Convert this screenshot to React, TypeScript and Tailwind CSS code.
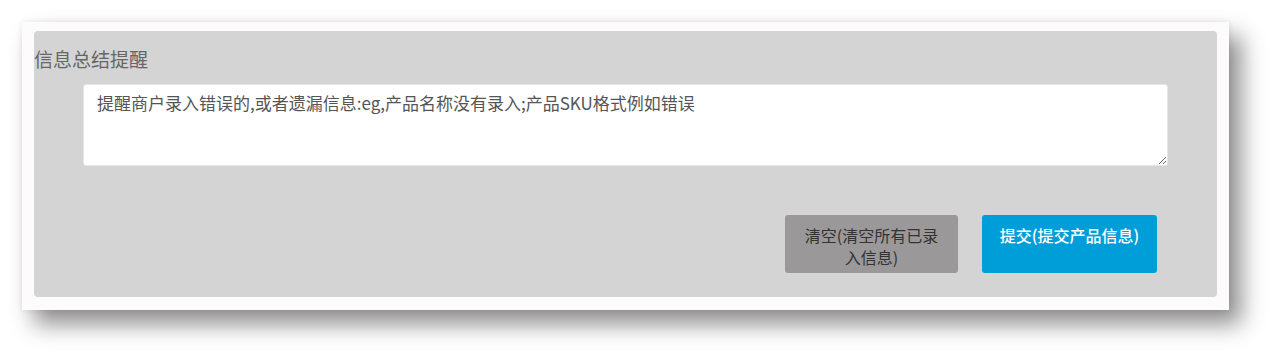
import { useState } from "react";

const font = { fontFamily: '"Noto Sans CJK SC", "Noto Sans", sans-serif' };

export default function App() {
  const [note, setNote] = useState(
    "提醒商户录入错误的,或者遗漏信息:eg,产品名称没有录入;产品SKU格式例如错误"
  );

  return (
    <div className="min-h-[361px] w-[1279px] bg-white pt-[22px] pl-[22px]" style={font}>
      <div className="w-[1207px] bg-[#fdfbfc] pt-[9px] pl-[12px] pr-[12px] pb-[13px] shadow-[0_0_6px_rgba(0,0,0,0.08),12px_14px_22px_rgba(0,0,0,0.45)]">
        <div className="flex flex-col rounded-[4px] bg-[#d4d4d4] pt-[15px] pb-[24px]">
          {/* 标题 */}
          <div className="text-[19px] leading-[26px] text-[#666666]">信息总结提醒</div>

          <textarea
            value={note}
            onChange={(e) => setNote(e.target.value)}
            className="mx-[49px] mt-[12px] h-[82px] rounded-[3px] border border-[#e6e6e6] bg-white px-[13px] pt-[6px] text-[17px] leading-[24px] text-[#555555] outline-none"
          />

          {/* 操作按钮 */}
          <div className="mt-[49px] flex justify-end gap-[24px] pr-[60px]">
            <button className="h-[58px] w-[173px] rounded-[3px] bg-[#9a9898] px-[12px] pt-[9px] text-center text-[16px] leading-[22px] text-[#333333] flex items-start justify-center">
              清空(清空所有已录入信息)
            </button>
            <button className="h-[58px] w-[175px] rounded-[3px] bg-[#009ed8] px-[12px] pt-[9px] text-center text-[16px] leading-[22px] font-medium text-white flex items-start justify-center">
              提交(提交产品信息)
            </button>
          </div>
        </div>
      </div>
    </div>
  );
}
